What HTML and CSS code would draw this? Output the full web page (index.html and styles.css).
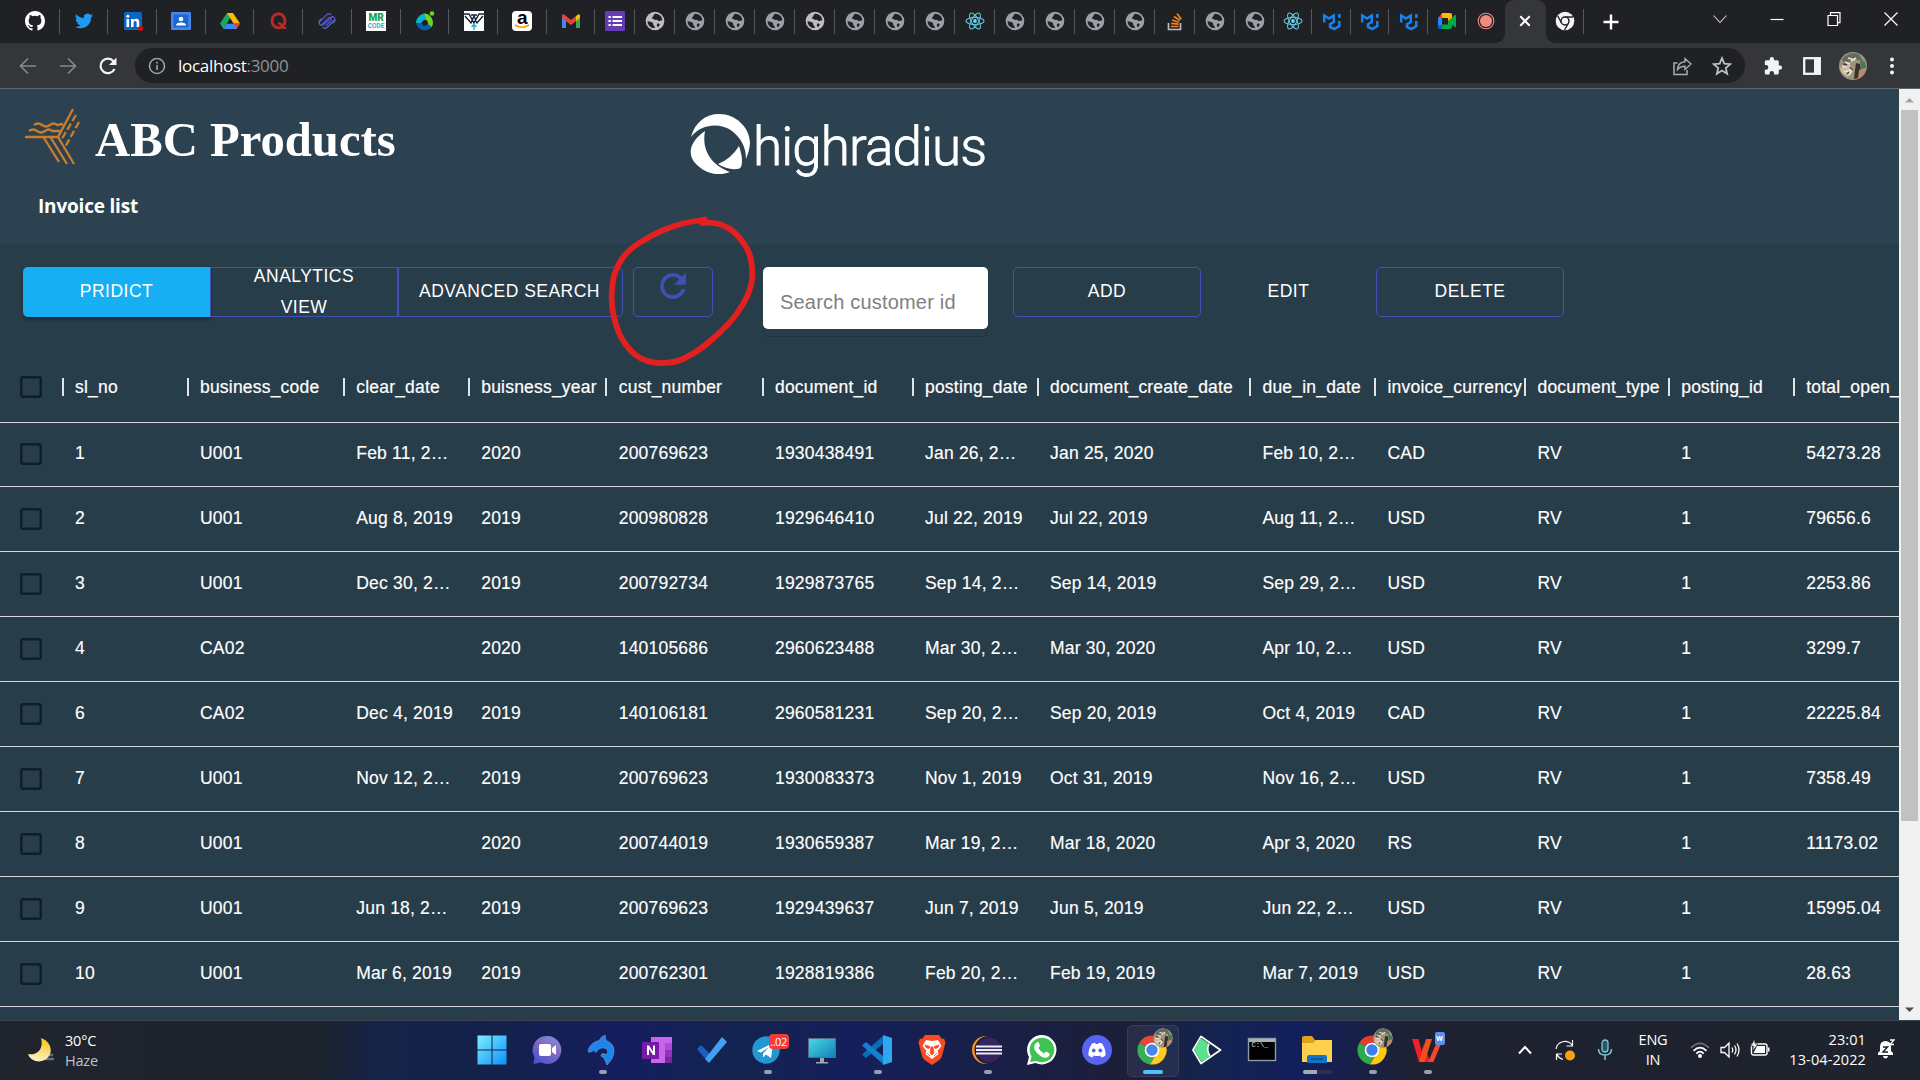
FILE: index.html
```html
<!DOCTYPE html>
<html lang="en">
<head>
<meta charset="utf-8">
<title>ABC Products</title>
<link rel="stylesheet" href="styles.css">
</head>
<body>
<svg class="sprite" aria-hidden="true">
  <symbol id="globe" viewBox="0 0 20 20"><circle cx="10" cy="10" r="9.300" fill="currentColor"/><path d="M2.600 10.300c1.800.5 3.600.3 4.800 1.200 1.200 1 .4 2 1.300 2.900.9.7 1.200 1.300 1 2.700C5.500 17.300 2.500 14.300 2.600 10.300zM9.800 2.800c-1.500.9-.7 2.200-2 2.900-.9.500-1.400 1.400-.3 1.900 1.200.5 2 1.500 3.300 1.300 1.600-.3 1.800 1.200 3.200 1.200 1.300 0 1.500-.9 3.300-.5.200-3.900-3.200-7-7.500-6.800zM12.500 12.600c1-.2 2.100.2 2.300 1.100-.5 1.200-1.300 1.900-2.300 2.300-.8-.9-.9-2.900 0-3.400z" fill="#202124"/></symbol>
  <symbol id="react" viewBox="0 0 20 20"><g fill="none" stroke="#5fc3d9" stroke-width="1.100"><ellipse cx="10" cy="10" rx="9" ry="3.600"/><ellipse cx="10" cy="10" rx="9" ry="3.600" transform="rotate(60 10 10)"/><ellipse cx="10" cy="10" rx="9" ry="3.600" transform="rotate(120 10 10)"/></g><circle cx="10" cy="10" r="1.900" fill="#61dafb"/></symbol>
  <symbol id="mui" viewBox="0 0 20 20"><path d="M2.200 11.500V4.500l4.800 3 4.800-3V11l-3.800 2.300v2.700l4.300 2 5-3V10" fill="none" stroke="#1583f0" stroke-width="2.500"/><path d="M17.300 3v4" stroke="#1583f0" stroke-width="2.500"/></symbol>
  <symbol id="chrome" viewBox="0 0 30 30"><path d="M15 15 2.400 7.700A14.500 14.500 0 0 1 27.600 7.700H15z" fill="#e33b2e"/><path d="M15 15 2.400 7.700A14.500 14.500 0 0 0 13 29.400l6-10z" fill="#2da94f"/><path d="M15 7.700h12.600A14.500 14.500 0 0 1 13 29.400l6.500-10.700z" fill="#fdc90f"/><circle cx="15" cy="15" r="7.300" fill="#fff"/><circle cx="15" cy="15" r="5.700" fill="#3b7ded"/></symbol>
  <symbol id="photo" viewBox="0 0 28 28"><circle cx="14" cy="14" r="14" fill="#9c937e"/><path d="M3 7q7-8 17-5l4 7-9-2-9 5z" fill="#646a5c"/><path d="M1 16l9-4 5 5-6 8q-7-3-8-9z" fill="#cdb99f"/><path d="M17 11l4 1 1 7-3 7-4 1 1-9z" fill="#39302a"/><path d="M21 8l5 2 1 6-5 1z" fill="#447a54"/><path d="M20 18l6-2-2 7-5 4z" fill="#b98c70"/><path d="M6 10l5 2M9 6l7 2M5 20l7-2M10 23l3-4M3 14l5 1M12 9l5-3" stroke="#ebe6da" stroke-width="1.500"/><path d="M4 12l4 1M11 15l3 3M8 22l2-2" stroke="#4b4439" stroke-width="1.500"/></symbol>
</svg>

<header class="tabstrip">
  <div class="tab wide"><svg class="fav" viewBox="0 0 16 16"><path fill="#fff" d="M8 0C3.580 0 0 3.580 0 8c0 3.540 2.290 6.530 5.470 7.590.4.070.55-.17.55-.38 0-.19-.01-.82-.01-1.490-2.010.37-2.530-.49-2.690-.94-.09-.23-.48-.94-.82-1.130-.28-.15-.68-.52-.01-.53.63-.01 1.080.58 1.230.82.72 1.210 1.870.87 2.330.66.070-.52.280-.87.510-1.070-1.780-.2-3.640-.89-3.640-3.950 0-.87.31-1.590.82-2.150-.08-.2-.36-1.020.080-2.120 0 0 .67-.21 2.200.82a7.600 7.600 0 0 1 4 0c1.530-1.040 2.200-.82 2.200-.82.44 1.100.16 1.920.080 2.120.51.56.82 1.270.82 2.150 0 3.070-1.870 3.750-3.650 3.950.29.25.54.73.54 1.480 0 1.070-.01 1.930-.01 2.200 0 .21.150.46.550.38A8 8 0 0 0 16 8c0-4.420-3.580-8-8-8z"/></svg></div>
  <div class="tab wide"><svg class="fav bird" viewBox="0 0 24 24"><path fill="#1d9bf0" d="M23.950 4.570a10 10 0 0 1-2.820.77 4.960 4.960 0 0 0 2.160-2.720c-.95.55-2 .95-3.130 1.180a4.920 4.920 0 0 0-8.380 4.480C7.690 8.100 4.070 6.130 1.640 3.160a4.920 4.920 0 0 0 1.520 6.570 4.900 4.900 0 0 1-2.230-.61v.060a4.920 4.920 0 0 0 3.950 4.830 5 5 0 0 1-2.210.080 4.940 4.940 0 0 0 4.600 3.420A9.870 9.870 0 0 1 0 19.540a14 14 0 0 0 7.550 2.210c9.050 0 14-7.500 14-13.980 0-.21 0-.42-.020-.63a9.900 9.900 0 0 0 2.420-2.570z"/></svg></div>
  <div class="tab wide"><svg class="fav" viewBox="0 0 20 20"><rect x="1" y="1" width="18" height="18" rx="1.500" fill="#0a66c2"/><path d="M3.500 8h2.600v8H3.500zM8 8h2.500v1.200q.9-1.400 2.700-1.400c2.400 0 3 1.500 3 3.800V16h-2.600v-4c0-1.200-.2-2-1.400-2s-1.600.9-1.600 2v4H8z" fill="#fff"/><circle cx="4.800" cy="5.300" r="1.500" fill="#fff"/><circle cx="17.500" cy="17.500" r="2.500" fill="#cc1016"/></svg></div>
  <div class="tab wide"><svg class="fav" viewBox="0 0 20 20"><rect width="20" height="18" y="1" rx="1" fill="#4a86e8"/><rect x="2.500" y="3.500" width="15" height="13" fill="#1967d2"/><circle cx="10" cy="8" r="2.300" fill="#fff"/><path d="M5 14.500q0-3 5-3t5 3z" fill="#fff"/></svg></div>
  <div class="tab wide"><svg class="fav" viewBox="0 0 20 20"><path d="M7 2h6l-6.500 11.500L3.500 18 0 12.500z" fill="#1fa463"/><path d="M7 2h6l7 10.500h-6.500z" fill="#fbbc04"/><path d="M3.500 18 7 12.500h13L16.500 18z" fill="#4285f4"/><path d="M14 12.500h6L16.500 18z" fill="#ea4335"/><path d="M10 7.500l3 5H7z" fill="#202124"/></svg></div>
  <div class="tab wide"><svg class="fav" viewBox="0 0 20 20"><ellipse cx="9.500" cy="9.700" rx="6.500" ry="7" fill="none" stroke="#b92b27" stroke-width="3"/><path d="M9 12.500q3-.5 4 2.500t4 1.500" fill="none" stroke="#b92b27" stroke-width="2.200"/></svg></div>
  <div class="tab wide"><svg class="fav" viewBox="0 0 20 20"><g fill="none" stroke="#5553cf" stroke-width="1.300" stroke-linecap="round"><path d="M2.500 11l7.500-7.500q2-1.500 4 0M5 13.500l6.500-6.500q1.500-1 2.500 0t0 2.500L9 14.500"/><path d="M17.500 9l-7.500 7.500q-2 1.500-4 0M4 8q-3 2.500-1.500 5t4 0" stroke="#4470c4"/><path d="M16 12q3-2.500 1.500-5t-4 0l-6 6"/></g></svg></div>
  <div class="tab wide"><span class="mr"><b>MR</b><i>CODE</i></span></div>
  <div class="tab wide"><svg class="fav" viewBox="0 0 20 20"><path d="M9 2.500C13 2 18 6 18 12c0 3-2 5-4 5.500L13 12q0-3-4-4z" fill="#72d51f"/><path d="M9 2.500C4 4 1 8 1 12l5 1q1-4 5-4.500 0-3-2-6z" fill="#0ab3cc"/><path d="M1 12q2 7 8 7.500 5 0 7.500-4l-4-2.500q-3 4-6-.5z" fill="#075fa8"/><circle cx="17" cy="2.500" r="2.300" fill="#72d51f"/></svg></div>
  <div class="tab wide"><svg class="fav" viewBox="0 0 20 20"><rect width="20" height="20" fill="#fff"/><path d="M0 3h5l5 9 5-9h5M1 5l6 7 3-7 3 7 6-7M7 4h6" fill="none" stroke="#17223b" stroke-width="1.400"/><path d="M10 19v-5m-2.500 2 2.500-2.500 2.500 2.500" fill="none" stroke="#12b5cb" stroke-width="1.400"/></svg></div>
  <div class="tab wide"><span class="amazon">a<svg viewBox="0 0 18 5"><path d="M2 1q7 4.500 14 0" fill="none" stroke="#ff9900" stroke-width="1.700"/></svg></span></div>
  <div class="tab wide"><svg class="fav" viewBox="0 0 20 20"><path d="M1 4v13h4V8z" fill="#4285f4"/><path d="M15 8v9h4V4z" fill="#34a853"/><path d="M15 5v5l4-3V4q-1-2-4 1z" fill="#fbbc04"/><path d="M1 4v3l9 7 5-4V5l-5 4-5-4Q2 2 1 4z" fill="#ea4335"/></svg></div>
  <div class="tab"><svg class="fav" viewBox="0 0 20 20"><rect width="20" height="20" rx="1" fill="#673ab7"/><path d="M7.500 6H17M7.500 10H17M7.500 14H17" stroke="#fff" stroke-width="2.200"/><path d="M3.500 6h2.300M3.500 10h2.300M3.500 14h2.300" stroke="#fff" stroke-width="2.200"/></svg></div>
  <div class="tab hot"><svg class="fav"><use href="#globe"/></svg></div>
  <div class="tab"><svg class="fav"><use href="#globe"/></svg></div>
  <div class="tab"><svg class="fav"><use href="#globe"/></svg></div>
  <div class="tab"><svg class="fav"><use href="#globe"/></svg></div>
  <div class="tab hot"><svg class="fav"><use href="#globe"/></svg></div>
  <div class="tab"><svg class="fav"><use href="#globe"/></svg></div>
  <div class="tab"><svg class="fav"><use href="#globe"/></svg></div>
  <div class="tab"><svg class="fav"><use href="#globe"/></svg></div>
  <div class="tab"><svg class="fav"><use href="#react"/></svg></div>
  <div class="tab"><svg class="fav"><use href="#globe"/></svg></div>
  <div class="tab"><svg class="fav"><use href="#globe"/></svg></div>
  <div class="tab"><svg class="fav"><use href="#globe"/></svg></div>
  <div class="tab"><svg class="fav"><use href="#globe"/></svg></div>
  <div class="tab"><svg class="fav" viewBox="0 0 20 20"><path d="M3.500 12v6.500h12V12" fill="none" stroke="#bcbbbb" stroke-width="1.700"/><path d="M6 15.500h7.500M6.200 12.300l7.300.8M7 9l7 2.200M9 5.500l6 4M12 2.500l4.300 5.700" stroke="#f48024" stroke-width="1.700"/></svg></div>
  <div class="tab"><svg class="fav"><use href="#globe"/></svg></div>
  <div class="tab slim"><svg class="fav"><use href="#globe"/></svg></div>
  <div class="tab slim"><svg class="fav"><use href="#react"/></svg></div>
  <div class="tab slim"><svg class="fav"><use href="#mui"/></svg></div>
  <div class="tab slim"><svg class="fav"><use href="#mui"/></svg></div>
  <div class="tab slim"><svg class="fav"><use href="#mui"/></svg></div>
  <div class="tab slim"><svg class="fav" viewBox="0 0 20 20"><path d="M1 7h4v7H1z" fill="#2684fc"/><path d="M5 2v5H1z" fill="#ea4335"/><path d="M5 2h8q2 0 2 2v4l-4 2V7H5z" fill="#ffba00"/><path d="M1 14h4v4H3q-2 0-2-2z" fill="#0066da"/><path d="M5 13.500h6V10l7-6q1-.5 1 .5v11q0 1-1 .5l-3-2.500V16q0 2-2 2H5z" fill="#00ac47"/></svg></div>
  <div class="tab slim last"><svg class="fav" viewBox="0 0 20 20"><circle cx="10" cy="10" r="6" fill="#f28b82"/><circle cx="10" cy="10" r="7.800" fill="none" stroke="#f28b82" stroke-width="1.100"/></svg></div>
  <div class="tab active"><svg width="12" height="12" viewBox="0 0 12 12"><path d="M1.300 1.300l9.400 9.400M10.700 1.300 1.300 10.700" stroke="#fff" stroke-width="2"/></svg></div>
  <div class="tab after"><svg class="fav" viewBox="0 0 20 20"><circle cx="10" cy="10" r="9.300" fill="#f1f3f4"/><path d="M10 6h8M6.500 12 2.800 5M13.500 12l-4 7" stroke="#202124" stroke-width="1.400"/><circle cx="10" cy="10" r="4" fill="#f1f3f4" stroke="#202124" stroke-width="1.500"/></svg></div>
  <div class="newtab"><svg width="16" height="16" viewBox="0 0 16 16"><path d="M8 .5v15M.5 8h15" stroke="#fff" stroke-width="2.400"/></svg></div>
  <div class="winctl">
    <svg viewBox="0 0 16 16"><path d="M1.500 4.500 8 11.500l6.500-7" fill="none" stroke="#cfd0d2" stroke-width="1.100"/></svg>
    <svg viewBox="0 0 16 16"><path d="M1.500 8.500h13" stroke="#fff" stroke-width="1.200"/></svg>
    <svg viewBox="0 0 16 16"><path d="M2 4.500h9.500v10H2zM4.500 4V1.700h9.500v10h-2" fill="none" stroke="#fff" stroke-width="1.200"/></svg>
    <svg viewBox="0 0 16 16"><path d="M1.500 1.500l13 13M14.500 1.500l-13 13" stroke="#fff" stroke-width="1.200"/></svg>
  </div>
</header>

<nav class="toolbar">
  <svg class="nav dim" viewBox="0 0 20 20"><path d="M18 10H3M10 2.500 2.500 10l7.500 7.500" fill="none" stroke="currentColor" stroke-width="1.700"/></svg>
  <svg class="nav dim" viewBox="0 0 20 20"><path d="M2 10h15M10 2.500l7.500 7.500-7.500 7.500" fill="none" stroke="currentColor" stroke-width="1.700"/></svg>
  <svg class="nav" viewBox="0 0 20 20"><path d="M16.500 13A7.300 7.300 0 1 1 15.500 5.200L17 7" fill="none" stroke="#f1f3f4" stroke-width="2.200"/><path d="M18.500 1.500V9H11z" fill="#f1f3f4"/></svg>
  <div class="omnibox">
    <svg class="info" viewBox="0 0 18 18"><circle cx="9" cy="9" r="7.500" fill="none" stroke="#9aa0a6" stroke-width="1.600"/><path d="M9 8v5M9 4.800v1.800" stroke="#9aa0a6" stroke-width="1.700"/></svg>
    <span class="url">localhost<em>:3000</em></span>
    <svg class="share" viewBox="0 0 20 20"><path d="M5.500 7H2v11.500h13V14" fill="none" stroke="#a9adb1" stroke-width="1.500"/><path d="M5.500 13.500q.5-7.500 7.500-7.800V2.500L19 8l-6 5.500v-3.300q-5 0-7.500 3.300z" fill="none" stroke="#a9adb1" stroke-width="1.400"/></svg>
    <svg class="star" viewBox="0 0 20 20"><path d="M10 2.800l2.100 5 5.400.5-4.100 3.500 1.300 5.300-4.700-2.900-4.700 2.900 1.300-5.300L2.500 8.300l5.400-.5z" fill="none" stroke="#bdc1c6" stroke-width="1.600"/></svg>
  </div>
  <svg class="ext" viewBox="0 0 20 20"><path d="M17 9.500h-1.200V5.800q0-1.500-1.500-1.500H11V3.200a2.100 2.100 0 0 0-4.300 0v1.100H3.300Q1.800 4.300 1.800 5.800v3.300H3a2.300 2.300 0 0 1 0 4.600H1.800v3.400q0 1.500 1.500 1.500h3.300v-1.300a2.200 2.200 0 0 1 4.400 0v1.300h3.300q1.500 0 1.500-1.500v-3.400H17a2.100 2.100 0 0 0 0-4.200z" fill="#f1f3f4"/></svg>
  <svg class="panel" viewBox="0 0 18 18"><rect x="1.200" y="1.200" width="15.600" height="15.600" fill="none" stroke="#f1f3f4" stroke-width="2.300"/><path d="M11 1h6v16h-6z" fill="#f1f3f4"/></svg>
  <svg class="avatar"><use href="#photo"/></svg>
  <svg class="dots" viewBox="0 0 6 18"><g fill="#f1f3f4"><circle cx="3" cy="2.500" r="2"/><circle cx="3" cy="9" r="2"/><circle cx="3" cy="15.500" r="2"/></g></svg>
</nav>

<main class="viewport">
  <div class="page">
    <section class="brand">
      <div class="brand-row">
        <svg class="abc-mark" viewBox="0 0 55 57"><g fill="none" stroke="#cb7d2c" stroke-width="2.300"><path d="M0 29h33L48 1M9 17q4-3 8 0t8 0 7 0l6-1M4 23q4-3 8 0t8 0 7 0h8M19 30l15 24M26 30l16 26M33 29l16 27"/><path d="M51 7 35 34M54 14 39 41" stroke-dasharray="7 3"/></g></svg>
        <h1>ABC Products</h1>
        <div class="hr-logo">
          <svg viewBox="0 0 60 60"><g fill="#fff"><path d="M1 23C5 8 16 0 29 0c17 0 30 13 31 28 0 6-2 12-4 17 0-12-5-21-14-28C31 9 12 9 1 23z"/><path d="M15 17C-1 28-3 41 6 50c9 9 21 13 34 8C24 52 11 39 15 17z"/><path d="M49 32c3 9 4 16 2 21q-1 2-4 2-10 1-19-5 13-5 21-18z"/></g></svg>
          <span>highradius</span>
        </div>
      </div>
      <h2>Invoice list</h2>
    </section>

    <section class="actions">
      <div class="group">
        <button class="btn primary">PRIDICT</button>
        <button class="btn mid">ANALYTICS VIEW</button>
        <button class="btn end">ADVANCED SEARCH</button>
      </div>
      <button class="btn refresh"><svg viewBox="0 0 24 24"><path d="M17.650 6.350A7.960 7.960 0 0 0 12 4a8 8 0 1 0 7.730 10h-2.080A6 6 0 1 1 12 6c1.660 0 3.140.69 4.220 1.780L13 11h7V4z" fill="#3f51b5" stroke="#3f51b5" stroke-width=".3"/></svg></button>
      <div class="search"><div class="field">Search customer id</div></div>
      <button class="btn solo">ADD</button>
      <button class="btn bare">EDIT</button>
      <button class="btn solo">DELETE</button>
    </section>

    <section class="grid">
      <div class="row head"><span class="check"></span><span>sl_no</span><span>business_code</span><span>clear_date</span><span>buisness_year</span><span>cust_number</span><span>document_id</span><span>posting_date</span><span>document_create_date</span><span>due_in_date</span><span>invoice_currency</span><span>document_type</span><span>posting_id</span><span>total_open_</span></div>
      <div class="row first"><span class="check"></span><span>1</span><span>U001</span><span>Feb 11, 2020</span><span>2020</span><span>200769623</span><span>1930438491</span><span>Jan 26, 2020</span><span>Jan 25, 2020</span><span>Feb 10, 2020</span><span>CAD</span><span>RV</span><span>1</span><span>54273.28</span></div>
      <div class="row"><span class="check"></span><span>2</span><span>U001</span><span>Aug 8, 2019</span><span>2019</span><span>200980828</span><span>1929646410</span><span>Jul 22, 2019</span><span>Jul 22, 2019</span><span>Aug 11, 2019</span><span>USD</span><span>RV</span><span>1</span><span>79656.6</span></div>
      <div class="row"><span class="check"></span><span>3</span><span>U001</span><span>Dec 30, 2019</span><span>2019</span><span>200792734</span><span>1929873765</span><span>Sep 14, 2019</span><span>Sep 14, 2019</span><span>Sep 29, 2019</span><span>USD</span><span>RV</span><span>1</span><span>2253.86</span></div>
      <div class="row"><span class="check"></span><span>4</span><span>CA02</span><span></span><span>2020</span><span>140105686</span><span>2960623488</span><span>Mar 30, 2020</span><span>Mar 30, 2020</span><span>Apr 10, 2020</span><span>USD</span><span>RV</span><span>1</span><span>3299.7</span></div>
      <div class="row"><span class="check"></span><span>6</span><span>CA02</span><span>Dec 4, 2019</span><span>2019</span><span>140106181</span><span>2960581231</span><span>Sep 20, 2019</span><span>Sep 20, 2019</span><span>Oct 4, 2019</span><span>CAD</span><span>RV</span><span>1</span><span>22225.84</span></div>
      <div class="row"><span class="check"></span><span>7</span><span>U001</span><span>Nov 12, 2019</span><span>2019</span><span>200769623</span><span>1930083373</span><span>Nov 1, 2019</span><span>Oct 31, 2019</span><span>Nov 16, 2019</span><span>USD</span><span>RV</span><span>1</span><span>7358.49</span></div>
      <div class="row"><span class="check"></span><span>8</span><span>U001</span><span></span><span>2020</span><span>200744019</span><span>1930659387</span><span>Mar 19, 2020</span><span>Mar 18, 2020</span><span>Apr 3, 2020</span><span>RS</span><span>RV</span><span>1</span><span>11173.02</span></div>
      <div class="row"><span class="check"></span><span>9</span><span>U001</span><span>Jun 18, 2019</span><span>2019</span><span>200769623</span><span>1929439637</span><span>Jun 7, 2019</span><span>Jun 5, 2019</span><span>Jun 22, 2019</span><span>USD</span><span>RV</span><span>1</span><span>15995.04</span></div>
      <div class="row"><span class="check"></span><span>10</span><span>U001</span><span>Mar 6, 2019</span><span>2019</span><span>200762301</span><span>1928819386</span><span>Feb 20, 2019</span><span>Feb 19, 2019</span><span>Mar 7, 2019</span><span>USD</span><span>RV</span><span>1</span><span>28.63</span></div>
    </section>

    <svg class="ink" viewBox="600 210 160 160"><path d="M704.600 219.500C697 221 689 222 681 224C667 228 657 232 646 239C635 245 628 250 622.500 258C615 269 612 278 612 290C611 300 612 308 613.500 315C616 327 620 337 626 345C632 353 638 358 646 360.500C652 363 658 363.500 663.600 363C673 363 681 361 688.600 356C698 351 706 345 713.600 338C724 329 732 321 738.600 311C745 302 749 293 751 285C753 276 753 269 751 261C750 253 747 247 742 241C737 234 732 229 724 226C716 222 710 222 702 223" fill="none" stroke="#e2201f" stroke-width="5.800" stroke-linecap="round" stroke-linejoin="round"/></svg>
  </div>
  <div class="scrollbar">
    <svg viewBox="0 0 21 21"><path d="M6 13.500 10.500 9l4.500 4.500z" fill="#a3a3a3"/></svg>
    <div class="thumb"></div>
    <svg viewBox="0 0 21 21"><path d="M6 8.500h9L10.500 13z" fill="#505050"/></svg>
  </div>
</main>

<footer class="taskbar">
  <div class="weather">
    <svg viewBox="0 0 28 26"><defs><linearGradient id="moon" x1=".6" y1="0" x2=".4" y2="1"><stop offset="0" stop-color="#f9c60d"/><stop offset=".6" stop-color="#fbe08c"/><stop offset="1" stop-color="#fdf0c4"/></linearGradient></defs><path d="M18 22h8M16 18h9" stroke="#66707c" stroke-width="2.500" stroke-linecap="round"/><path d="M14 1c9 3 12 12 8 18C17 27 4 26 1 17c9 2 16-5 13-16z" fill="url(#moon)"/></svg>
    <div><p>30°C</p><p class="soft">Haze</p></div>
  </div>

  <div class="apps">
    <div class="app"><svg viewBox="0 0 30 30"><defs><linearGradient id="win" x1="0" y1="0" x2="30" y2="30" gradientUnits="userSpaceOnUse"><stop offset="0" stop-color="#7ff0ff"/><stop offset="1" stop-color="#0a8dfc"/></linearGradient></defs><path d="M.5.5h14v14H.5zM15.500.5h14v14h-14zM.5 15.500h14v14H.5zM15.500 15.500h14v14h-14z" fill="url(#win)"/></svg></div>
    <div class="app"><svg viewBox="0 0 30 30"><defs><linearGradient id="chat" x1="1" y1="0" x2=".3" y2="1"><stop offset="0" stop-color="#6e9cf0"/><stop offset=".4" stop-color="#8b6fc4"/><stop offset="1" stop-color="#4c54c8"/></linearGradient></defs><path d="M15 1a14 14 0 1 1-6 26.500L1.500 29l1-7A14 14 0 0 1 15 1z" fill="url(#chat)"/><rect x="7" y="9" width="12" height="12" rx="2" fill="#fff"/><path d="M20 13l4-3v10l-4-3z" fill="#fff"/></svg></div>
    <div class="app run"><svg viewBox="0 0 30 30"><path d="M18 0l1 5.500q8 3 8 10.500 0 7-7 14l-3-7-3-2 1-2.500 5 1q2-4-1-6-4-2-8 1l-2 3-2-2-5 2-1-2Q3 8 12 5.500q2-4 6-5.500z" fill="#1d85ef" stroke="#8a99c4" stroke-width=".6"/></svg></div>
    <div class="app"><svg viewBox="0 0 30 30"><path d="M9 2h21v26H9z" fill="#ca64ea"/><path d="M23 8h7v7h-7z" fill="#ae4bd5"/><path d="M23 15h7v7h-7z" fill="#9332bf"/><path d="M23 22h7v6h-7z" fill="#752a9b"/><rect y="7" width="17" height="17" rx="1" fill="#7719aa"/><path d="M5 20V10.500h2l4 6v-6h2V20h-2l-4-6v6z" fill="#fff"/></svg></div>
    <div class="app"><svg viewBox="0 0 30 30"><path d="M0 14l4-4 10 10-4 6z" fill="#1d5ec0"/><path d="M8 24 25 2l5 5-18 21z" fill="#41a0f2"/></svg></div>
    <div class="app run"><svg viewBox="0 0 30 30"><circle cx="14" cy="15" r="13.700" fill="#2497d3"/><path d="M5 16 21 8l-2 15-5-3.500-3 3v-4l6-6.500-8 5.500z" fill="#fff"/></svg><i class="badge">..02</i></div>
    <div class="app"><svg viewBox="0 0 30 30"><defs><linearGradient id="pc" x1="0" y1="0" x2="1" y2="1"><stop offset="0" stop-color="#4ad9e6"/><stop offset="1" stop-color="#127eb5"/></linearGradient></defs><path d="M1.500 3.500h27v19h-27z" fill="url(#pc)" stroke="#51707f"/><path d="M13 23h4v4h4v1.500H9V27h4z" fill="#9fa7ad"/></svg></div>
    <div class="app run"><svg viewBox="0 0 30 30"><path d="M21 1v8L4 23 0 19.500z" fill="#0a6db8"/><path d="M21 29v-8L4 7 0 10.500z" fill="#1280cc"/><path d="M21 0l9 3v24l-9 3z" fill="#2ea8ef"/></svg></div>
    <div class="app"><svg viewBox="0 0 30 30"><path d="M8 0h14l3 4 2-.5 1.500 4-1 4-3 11q-1 2-9.500 7.500Q6.500 24.500 5.500 22.500l-3-11-1-4L3 3.500 5 4z" fill="#fb4a20"/><path d="M9 5l6 1 6-1 3.500 6-4 5 1 3-6.500 5-6.500-5 1-3-4-5z" fill="#fff"/><path d="M8 10l5 1.500-1 2-3-1zM22 10l-5 1.500 1 2 3-1zM14 12h2l1 6-2 2-2-2zM10 18l3 3M20 18l-3 3" fill="#fb4a20" stroke="#fb4a20" stroke-width=".8"/></svg></div>
    <div class="app run"><svg viewBox="0 0 30 30"><circle cx="14" cy="15" r="14" fill="#f7941e"/><circle cx="16.500" cy="15" r="14" fill="#1b1d3c"/><circle cx="17" cy="15" r="12.500" fill="#33255f"/><path d="M4 11.500h26M4 15h26M4 18.500h26" stroke="#eceaf5" stroke-width="2"/></svg></div>
    <div class="app"><svg viewBox="0 0 30 30"><path d="M0 30l2-8A14.700 14.700 0 1 1 8.500 28z" fill="#fff"/><path d="M3 27l1.500-5.500a12.300 12.300 0 1 1 5 4.500z" fill="#3fc351"/><path d="M9 8q2-2 3 0l1 3-1.500 2q2 4 5.500 5.500l2-2 3.500 2q1 1-1 3c-3 3-8 0-11-3-3-3-5-7-1.500-10.500z" fill="#fff"/></svg></div>
    <div class="app"><svg viewBox="0 0 30 30"><circle cx="15" cy="15" r="15" fill="#5865f2"/><path d="M10 8.500l3-.8.8 1.300h2.400l.8-1.300 3 .8q4 6 3.500 12-2 1.500-4 2l-1.200-2q-3.300 1-6.600 0l-1.200 2q-2-.5-4-2Q6 14.500 10 8.500z" fill="#fff"/><circle cx="11.700" cy="15.500" r="1.900" fill="#5865f2"/><circle cx="18.300" cy="15.500" r="1.900" fill="#5865f2"/></svg></div>
    <div class="app current"><svg><use href="#chrome"/></svg><svg class="face"><use href="#photo"/></svg></div>
    <div class="app"><svg viewBox="0 0 30 30"><path d="M9 1.500 28.500 15 9 28.500 1 15z" fill="#1c2145" stroke="#fff" stroke-width="1.800" stroke-linejoin="round"/><path d="M8.500 3l9 6q-3 6 1 12l-9 6L2 15z" fill="#5be28c"/><path d="M17 9q-3 6 1 12" fill="none" stroke="#fff" stroke-width="1.500"/></svg></div>
    <div class="app"><svg viewBox="0 0 30 30"><rect x="1.500" y="3.500" width="27" height="22" fill="#000" stroke="#8e9aa5" stroke-width="1.400"/><path d="M2 4h26v3H2z" fill="#a9b1b8"/></svg><i class="prompt">C:\_</i></div>
    <div class="app multi"><svg viewBox="0 0 30 30"><path d="M0 3q0-2 2-2h8l3 4h15q2 0 2 2v20H0z" fill="#dfa216"/><path d="M0 8h11l3-3h16v22H0z" fill="#ffd04e"/><path d="M5 28v-6q0-2 2-2h16q2 0 2 2v6z" fill="#1173c7"/><path d="M9 24h12" stroke="#0a5197" stroke-width="1.500"/></svg></div>
    <div class="app run"><svg><use href="#chrome"/></svg><svg class="face"><use href="#photo"/></svg></div>
    <div class="app run"><svg viewBox="0 0 30 30"><path d="M0 4h6.500l6 23H7z" fill="#f01f2e"/><path d="M18 27h-5.500L9.500 16l2.500-7z" fill="#e0262b"/><path d="M7 27h5.500L20 4h-6z" fill="#f2501f"/><path d="M16 27h5.500L29 9l-4.500-1z" fill="#f4472a"/></svg><i class="doc">W</i></div>
  </div>

  <div class="tray">
    <svg class="up" viewBox="0 0 16 16"><path d="M2 11.500 8 5l6 6.500" fill="none" stroke="#fff" stroke-width="2"/></svg>
    <svg class="sync" viewBox="0 0 22 22"><path d="M2 10a9 9 0 0 1 16-4M18.500 1v6h-6M8 15H2.500v6M3 15.500q2 4 6 5" fill="none" stroke="#fff" stroke-width="1.200"/><circle cx="16" cy="16.500" r="5" fill="#ff9f0e"/></svg>
    <svg class="mic" viewBox="0 0 16 22"><rect x="5" y="1" width="6" height="12" rx="3" fill="#2b5560" stroke="#7cc6dc" stroke-width="1.300"/><path d="M1.500 10q0 6 6.500 6t6.500-6M8 16v5" fill="none" stroke="#7cc6dc" stroke-width="1.500"/></svg>
    <div class="lang"><p>ENG</p><p>IN</p></div>
    <svg class="wifi" viewBox="0 0 20 18"><g fill="none" stroke-width="1.700"><path d="M1 7q9-9 18 0" stroke="#6a6e76"/><path d="M3.500 9.800q6.500-6.500 13 0M6.300 12.600q3.700-3.800 7.400 0" stroke="#fff"/></g><circle cx="10" cy="15" r="2" fill="#fff"/></svg>
    <svg class="vol" viewBox="0 0 20 18"><path d="M1 6.500h3.500L9 2v14l-4.500-4.500H1zM12 6.500q1.500 2.500 0 5M14.500 4.500q3 4.500 0 9M17 2.500q4 6.500 0 13" fill="none" stroke="#fff" stroke-width="1.300"/></svg>
    <svg class="bat" viewBox="0 0 20 18"><rect x="1.500" y="5" width="15.500" height="11" rx="2" fill="none" stroke="#fff" stroke-width="1.400"/><path d="M7 7h8v7H3.500zM18 8.500h1.500v4H18z" fill="#fff"/><path d="M4.500 0 1 7h2.500l-1 5L8 5H5z" fill="#fff" stroke="#1e222c" stroke-width=".6"/></svg>
    <div class="clock"><p>23:01</p><p>13-04-2022</p></div>
    <svg class="bell" viewBox="0 0 18 20"><path d="M1 16v-2l2-2V8q0-6 5.500-6T14 8v4l2 2v2zM6 17h5q-.5 2.500-2.500 2.500T6 17z" fill="#fff"/><path d="M6 8h4.500L6 13h5" fill="none" stroke="#1e222c" stroke-width="1.500"/><path d="M13 1h4l-4 4.500h4" fill="none" stroke="#fff" stroke-width="1.300"/></svg>
  </div>
</footer>
</body>
</html>
```
FILE: styles.css
```css
* { box-sizing: border-box; }
body {
  margin: 0;
  width: 1920px;
  height: 1080px;
  overflow: hidden;
  display: flex;
  flex-direction: column;
  background: #283d4a;
  color: #fff;
  font-family: "Liberation Sans", Arial, sans-serif;
}
p, h1, h2 { margin: 0; }
svg { display: block; flex: none; }
.sprite { display: none; }

/* Tab strip */
.tabstrip {
  display: flex;
  height: 43px;
  flex: none;
  padding-left: 11px;
  background: #202124;
}
.tab {
  width: 40px;
  flex: none;
  display: flex;
  align-items: center;
  justify-content: center;
  padding-bottom: 1px;
  color: #9ba0a8;
  background: linear-gradient(#55575b, #55575b) right 9px / 1px 25px no-repeat;
}
.tab.wide { width: 48.700px; }
.tab.slim { width: 38.500px; }
.tab.hot { color: #bdbdbd; }
.tab.last { background: none; }
.fav { width: 20px; height: 20px; }
.fav.bird { width: 18px; height: 18px; }
.tab.active {
  position: relative;
  width: 41px;
  background: #35363a;
  border-radius: 9px 9px 0 0;
}
.tab.active::before, .tab.active::after {
  content: "";
  position: absolute;
  bottom: 0;
  width: 9px;
  height: 9px;
}
.tab.active::before { left: -9px; background: radial-gradient(circle at 0 0, transparent 8.500px, #35363a 9px); }
.tab.active::after { right: -9px; background: radial-gradient(circle at 100% 0, transparent 8.500px, #35363a 9px); }
.tab.after { width: 38.500px; }
.newtab { width: 54px; display: flex; align-items: center; justify-content: center; }
.winctl {
  display: flex;
  gap: 41px;
  height: 37px;
  align-items: center;
  margin-left: 74px;
}
.winctl svg { width: 16px; height: 16px; }
.mr {
  width: 20px;
  height: 20px;
  background: #fff;
  display: flex;
  flex-direction: column;
  align-items: center;
  justify-content: center;
  overflow: hidden;
}
.mr b { font: 900 10px/10px "Roboto", sans-serif; color: #16a34a; }
.mr i { font: 700 6.500px/7px "Roboto", sans-serif; color: #3aa7d8; }
.amazon {
  width: 20px;
  height: 20px;
  border-radius: 4px;
  background: #fff;
  color: #000;
  font: 700 19px/13px "Liberation Sans", sans-serif;
  display: flex;
  flex-direction: column;
  align-items: center;
}
.amazon svg { width: 18px; height: 5px; }

/* Address bar */
.toolbar {
  display: flex;
  align-items: center;
  height: 46px;
  flex: none;
  padding: 0 0 0 18px;
  background: #35363a;
  border-bottom: 1px solid #5f666c;
}
.nav { width: 20px; height: 20px; margin-right: 20px; }
.nav:nth-child(3) { margin-right: 17px; }
.dim { color: #84878b; }
.omnibox {
  width: 1610px;
  height: 35px;
  border-radius: 18px;
  background: #202124;
  display: flex;
  align-items: center;
  padding: 0 12px 0 13px;
}
.info { width: 18px; height: 18px; }
.url {
  flex: 1;
  margin-left: 12px;
  font: 17px/24px "Open Sans", "Noto Sans", sans-serif;
  letter-spacing: -0.300px;
}
.url em { font-style: normal; color: #8f9398; }
.share { width: 20px; height: 20px; margin-right: 19px; }
.star { width: 22px; height: 22px; }
.ext { width: 20px; height: 20px; margin-left: 18px; }
.panel { width: 18px; height: 18px; margin-left: 20px; }
.avatar { width: 28px; height: 28px; margin-left: 18px; }
.dots { width: 6px; height: 18px; margin-left: 22px; }

/* Page */
.viewport { display: flex; height: 931px; flex: none; }
.page { position: relative; width: 1899px; overflow: hidden; }
.brand { height: 155px; background: #2d4250; padding: 18px 0 0 25px; }
.brand-row { display: flex; align-items: flex-start; height: 85px; }
.abc-mark { width: 55px; height: 57px; margin-top: 1px; }
h1 {
  width: 595px;
  margin-left: 15px;
  font: 700 48.700px/66px "Liberation Serif", "Times New Roman", serif;
}
.hr-logo { display: flex; margin-top: 7px; }
.hr-logo svg { width: 60px; height: 60px; }
.hr-logo span {
  margin-left: 3px;
  font: 300 53px/66px "Roboto", sans-serif;
  letter-spacing: -0.900px;
  -webkit-text-stroke: 0.800px #fff;
}
h2 {
  margin-left: 13px;
  font: 700 19px/28px "Open Sans", "Noto Sans", sans-serif;
  letter-spacing: -0.200px;
}
.actions { display: flex; height: 108px; padding: 23px 0 0 23px; align-items: flex-start; }
.btn {
  height: 50px;
  padding: 0 18px;
  border: 1px solid #3f51b5;
  border-radius: 5px;
  background: transparent;
  color: #fff;
  font: 17.500px/30.600px "Liberation Sans", Arial, sans-serif;
  letter-spacing: 0.480px;
  display: flex;
  align-items: center;
  justify-content: center;
  text-align: center;
  flex: none;
}
.group { display: flex; width: 600px; }
.primary {
  width: 187px;
  border: 0;
  border-radius: 5px 0 0 5px;
  background: #16aff3;
  box-shadow: 0 3px 4px rgba(0, 0, 0, 0.3);
  padding-bottom: 1px;
}
.mid { width: 188px; padding: 0 30px; border-radius: 0; }
.end { width: 225px; padding: 0 19px 2px 17px; white-space: nowrap; border-radius: 0 5px 5px 0; }
.refresh { width: 80px; margin-left: 10px; padding: 0 1px 12px 0; }
.refresh svg { width: 38px; height: 38px; }
.search {
  width: 225px;
  height: 70px;
  margin: 0 25px 0 50px;
  border: 1px solid #20333f;
  border-radius: 5px;
}
.field {
  width: 225px;
  height: 62px;
  margin: -1px;
  padding: 7px 0 0 17px;
  border-radius: 5px;
  background: #fff;
  color: #808080;
  font-size: 20px;
  line-height: 56px;
  letter-spacing: 0.190px;
}
.solo { width: 188px; padding-bottom: 1px; }
.bare { width: 175px; border-color: transparent; padding-bottom: 1px; }

/* Data grid */
.row {
  display: grid;
  grid-template-columns: 62.500px 125px 156.250px 125px 137.500px 156.250px 150px 125px 212.500px 125px 150px 143.750px 125px 125px;
  width: 1918px;
  height: 65px;
  border-bottom: 1px solid #d5dadd;
  font-size: 17.500px;
  line-height: 62px;
  letter-spacing: 0.200px;
  -webkit-text-stroke: 0.150px #fff;
}
.row span {
  padding: 0 12.500px;
  overflow: hidden;
  text-overflow: ellipsis;
  white-space: nowrap;
}
.row .check { padding: 0; display: flex; align-items: center; }
.check::before {
  content: "";
  width: 22px;
  height: 22px;
  margin-left: 20px;
  box-shadow: inset 0 0 0 2.500px #111e27;
  border-radius: 3px;
}
.row.first { height: 64px; line-height: 60px; }
.row.first .check { padding-bottom: 1px; }
.row.head { height: 71px; line-height: 70px; -webkit-text-stroke: 0.200px #fff; }
.row.head span { overflow: visible; }
.row.head span:not(.check) {
  margin-left: -1px;
  padding-left: 13.500px;
  background: linear-gradient(#e0e4e6, #e0e4e6) 0 26px / 2px 18px no-repeat;
}
.row .check { margin-left: -0.500px; }
.ink { position: absolute; left: 600px; top: 121px; width: 160px; height: 160px; }

.scrollbar { width: 21px; background: #f1f1f1; display: flex; flex-direction: column; }
.scrollbar svg { width: 21px; height: 21px; }
.thumb { width: 17px; height: 711px; margin: 0 2px auto; background: #c1c1c1; }

/* Taskbar */
.taskbar {
  height: 60px;
  flex: none;
  display: flex;
  border-top: 1px solid #3c4450;
  font-family: "Open Sans", "Noto Sans", sans-serif;
  font-size: 14.500px;
  line-height: 20px;
  letter-spacing: -0.200px;
  background: linear-gradient(90deg, #20242d 0, #1c232e 320px, #152447 375px, #13214b 500px, #151e60 625px, #14234f 730px, #151f5c 850px, #181f4c 950px, #1c1f3a 1120px, #142350 1215px, #131f5b 1300px, #1e2131 1420px, #1e232c 1920px);
}
.weather { width: 464.500px; display: flex; padding: 10px 0 0 27px; }
.weather svg { width: 28px; height: 26px; margin: 6px 10px 0 0; }
.soft { color: #bfc3c7; }
.apps { display: flex; width: 990px; }
.app {
  position: relative;
  width: 55px;
  display: flex;
  justify-content: center;
  padding-top: 14px;
}
.app > svg { width: 30px; height: 30px; }
.run::after, .current::after, .multi::after {
  content: "";
  position: absolute;
  left: 24px;
  top: 49px;
  width: 8px;
  height: 4px;
  border-radius: 2px;
  background: #9a9eae;
}
.current::before {
  content: "";
  position: absolute;
  left: 2px;
  top: 4px;
  width: 50px;
  height: 50px;
  border: 1px solid #3a3d58;
  border-radius: 5px;
  background: rgba(255, 255, 255, 0.06);
}
.current::after { left: 18px; width: 20px; background: #4cc2ff; }
.multi::after { left: 13px; width: 29px; background: linear-gradient(90deg, #a5a9b5 14px, #2c3147 14px); }
.app > .face { position: absolute; left: 28px; top: 7px; width: 20px; height: 20px; }
.face { border-radius: 50%; }
.badge {
  position: absolute;
  left: 29px;
  top: 13px;
  width: 20px;
  height: 15px;
  border-radius: 4px;
  background: #f23c3c;
  font: 11px/15px "Open Sans", sans-serif;
  text-align: center;
  letter-spacing: -0.500px;
}
.prompt {
  position: absolute;
  left: 17px;
  top: 20px;
  font: 7px/9px "Liberation Mono", monospace;
  letter-spacing: 0;
  color: #e0e0e0;
}
.doc {
  position: absolute;
  left: 35px;
  top: 11px;
  width: 10px;
  height: 13px;
  border-radius: 2px;
  background: #5b8ff0;
  font: 700 8px/13px "Roboto", sans-serif;
  letter-spacing: 0;
  text-align: center;
}
.tray { display: flex; padding-top: 9px; margin-left: 62.500px; }
.up { width: 16px; height: 16px; margin: 12px 21px 0 0; }
.sync { width: 22px; height: 22px; margin: 9px 21px 0 0; }
.mic { width: 16px; height: 22px; margin: 9px 22px 0 0; }
.lang { width: 36px; text-align: center; }
.wifi { width: 20px; height: 18px; margin: 11px 10px 0 19px; }
.vol { width: 20px; height: 18px; margin: 11px 10px 0 0; }
.bat { width: 20px; height: 18px; margin: 9px 0 0; }
.clock { width: 96px; text-align: right; letter-spacing: 0.100px; }
.bell { width: 18px; height: 20px; margin: 9px 0 0 11px; }
```
